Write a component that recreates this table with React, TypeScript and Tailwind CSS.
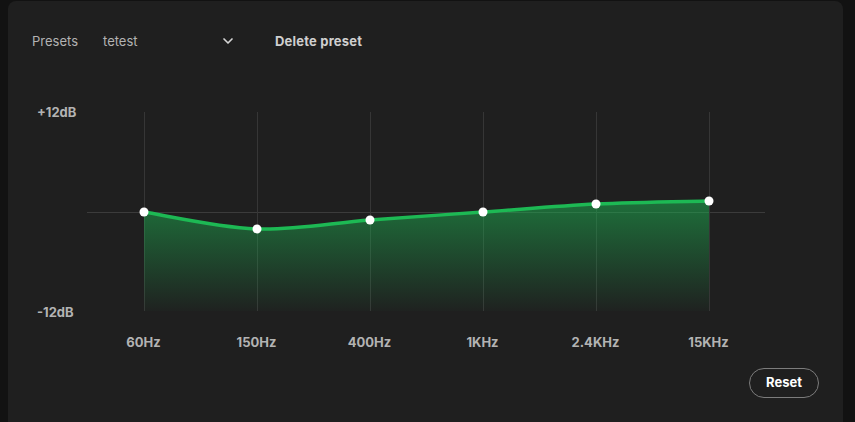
import { ChevronDown } from "lucide-react";

// band positions in chart-local coords (svg starts at x=82, y=100 of the page)
const BANDS = [
  { label: "60Hz", x: 62, y: 112 },
  { label: "150Hz", x: 175, y: 129 },
  { label: "400Hz", x: 288, y: 120 },
  { label: "1KHz", x: 401, y: 112 },
  { label: "2.4KHz", x: 514, y: 104 },
  { label: "15KHz", x: 627, y: 101 },
];

const TOP = 12;
const BOTTOM = 211;
const ZERO = 112;

/** Catmull-Rom -> cubic bezier through the band points. */
function curvePath(pts: { x: number; y: number }[]): string {
  let d = `M${pts[0].x},${pts[0].y}`;
  for (let i = 0; i < pts.length - 1; i++) {
    const p0 = pts[i - 1] ?? pts[i];
    const p1 = pts[i];
    const p2 = pts[i + 1];
    const p3 = pts[i + 2] ?? p2;
    const c1x = p1.x + (p2.x - p0.x) / 6;
    const c1y = p1.y + (p2.y - p0.y) / 6;
    const c2x = p2.x - (p3.x - p1.x) / 6;
    const c2y = p2.y - (p3.y - p1.y) / 6;
    d += ` C${c1x},${c1y} ${c2x},${c2y} ${p2.x},${p2.y}`;
  }
  return d;
}

function EqChart() {
  const line = curvePath(BANDS);
  const first = BANDS[0];
  const last = BANDS[BANDS.length - 1];
  const area = `${line} L${last.x},${BOTTOM} L${first.x},${BOTTOM} Z`;

  return (
    <svg width="690" height="220" viewBox="0 0 690 220" className="block shrink-0">
      <defs>
        <linearGradient id="eqFill" x1="0" y1="95" x2="0" y2={BOTTOM} gradientUnits="userSpaceOnUse">
          <stop offset="0" stopColor="#1db954" stopOpacity="0.55" />
          <stop offset="1" stopColor="#1db954" stopOpacity="0.02" />
        </linearGradient>
      </defs>
      <line x1="5" x2="683" y1={ZERO + 0.5} y2={ZERO + 0.5} stroke="#3b3b3b" strokeWidth="1" />
      {BANDS.map((b) => (
        <line key={b.label} x1={b.x + 0.5} x2={b.x + 0.5} y1={TOP} y2={BOTTOM} stroke="#363636" strokeWidth="1" />
      ))}
      <path d={area} fill="url(#eqFill)" />
      <path d={line} fill="none" stroke="#1db954" strokeWidth="3.5" strokeLinecap="round" />
      {BANDS.map((b) => (
        <circle key={b.label} cx={b.x} cy={b.y} r="4.5" fill="#ffffff" />
      ))}
    </svg>
  );
}

export default function App() {
  return (
    <div
      className="h-[422px] w-[855px] overflow-hidden bg-[#121212] pl-2 pr-3 pt-px"
      style={{ fontFamily: "Inter, 'Liberation Sans', sans-serif" }}
    >
      <div className="h-[440px] rounded-lg bg-[#1f1f1f] px-6 pt-[30px]">
        <div className="flex h-5 items-center text-[13px] leading-5">
          <span className="text-[#b3b3b3]">Presets</span>
          <button type="button" className="ml-[25px] flex w-[133px] items-center justify-between text-[#b3b3b3]">
            <span>tetest</span>
            <ChevronDown className="h-4 w-4 text-[#d6d6d6]" strokeWidth={2.5} />
          </button>
          <button type="button" className="ml-[39px] font-bold tracking-[0.2px] text-[#cfcfcf]">
            Delete preset
          </button>
        </div>

        <div className="mt-[49px] flex">
          <div className="flex h-[220px] w-[50px] flex-col justify-between pl-[5px] pt-1 text-[13px] font-bold leading-4 text-[#b3b3b3]">
            <span>+12dB</span>
            <span>-12dB</span>
          </div>
          <EqChart />
        </div>

        <div className="ml-[55px] mt-[14px] flex text-[13px] font-bold leading-4 text-[#b3b3b3]">
          {BANDS.map((b) => (
            <span key={b.label} className="w-[113px] text-center">
              {b.label}
            </span>
          ))}
        </div>

        <div className="mt-[18px] flex justify-end">
          <button
            type="button"
            className="flex h-[30px] w-[70px] items-center justify-center rounded-full border border-[#7c7c7c] text-[13px] font-bold text-white"
          >
            Reset
          </button>
        </div>
      </div>
    </div>
  );
}
